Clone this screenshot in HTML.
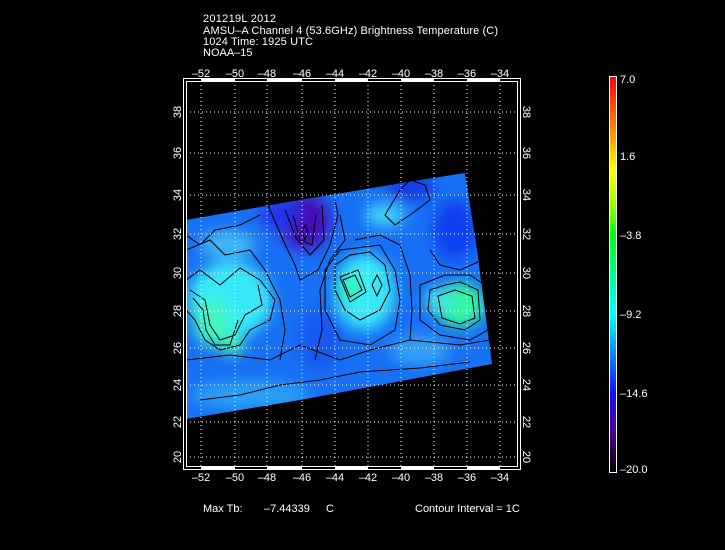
<!DOCTYPE html>
<html><head><meta charset="utf-8"><style>
html,body{margin:0;padding:0;background:#000;}
svg{display:block}
text{font-family:"Liberation Sans",sans-serif;fill:#fff;font-size:11px;}
</style></head><body>
<svg width="725" height="550" viewBox="0 0 725 550" xmlns="http://www.w3.org/2000/svg">
<defs>
<clipPath id="sw"><polygon points="186,220 300,200 420,180 465,173 477,250 492,364 300,400 186,419"/></clipPath>
<filter id="bl" x="-50%" y="-50%" width="200%" height="200%"><feGaussianBlur stdDeviation="7"/></filter>
<linearGradient id="cb" x1="0" y1="1" x2="0" y2="0">
<stop offset="0" stop-color="#000"/>
<stop offset="0.1" stop-color="#50008a"/>
<stop offset="0.2" stop-color="#1010ff"/>
<stop offset="0.4" stop-color="#00ffff"/>
<stop offset="0.6" stop-color="#00ff10"/>
<stop offset="0.68" stop-color="#a0ff00"/>
<stop offset="0.76" stop-color="#ffff00"/>
<stop offset="0.86" stop-color="#ff9000"/>
<stop offset="1" stop-color="#ff0000"/>
</linearGradient>
</defs>
<rect width="725" height="550" fill="#000"/>
<text x="203" y="22" textLength="73">201219L 2012</text>
<text x="203" y="34" textLength="295">AMSU–A Channel 4 (53.6GHz) Brightness Temperature (C)</text>
<text x="203" y="45" textLength="110">1024 Time: 1925 UTC</text>
<text x="203" y="56">NOAA–15</text>

<g clip-path="url(#sw)">
<rect x="180" y="165" width="320" height="260" fill="#1870f4"/>
<g filter="url(#bl)">
<ellipse cx="305" cy="222" rx="26" ry="28" fill="#4410b8"/>
<ellipse cx="280" cy="215" rx="20" ry="15" fill="#2030e8"/>
<ellipse cx="410" cy="188" rx="25" ry="12" fill="#1838e8"/>
<ellipse cx="455" cy="230" rx="22" ry="30" fill="#1040f0"/>
<ellipse cx="230" cy="300" rx="42" ry="38" fill="#38e8f8"/>
<ellipse cx="212" cy="322" rx="18" ry="24" fill="#40f8c0"/>
<ellipse cx="232" cy="345" rx="12" ry="10" fill="#40f0b0"/>
<ellipse cx="365" cy="292" rx="30" ry="38" fill="#38e8f8"/>
<ellipse cx="350" cy="288" rx="12" ry="10" fill="#30f8a8"/>
<ellipse cx="385" cy="215" rx="20" ry="12" fill="#40d0f8"/>
<ellipse cx="460" cy="305" rx="25" ry="22" fill="#30f8a0"/>
<ellipse cx="440" cy="300" rx="15" ry="12" fill="#40e8e0"/>
<ellipse cx="228" cy="245" rx="28" ry="14" fill="#40b8f8"/>
<ellipse cx="250" cy="395" rx="60" ry="14" fill="#2aa0f4"/>
<ellipse cx="320" cy="340" rx="22" ry="30" fill="#1858f0"/>
<ellipse cx="420" cy="350" rx="30" ry="15" fill="#30a0f4"/>
</g>
<g fill="none" stroke="#000" stroke-width="1">
<path d="M268,205 L283,240 L295,265 L300,280 L318,270 L330,245 L338,215 L335,200"/>
<path d="M285,210 L296,238 L310,255 L324,240 L322,205"/>
<path d="M293,215 L300,240 L312,245 L316,215"/>
<path d="M302,232 L305,225 L308,232 L305,240 Z"/>
<path d="M186,280 L200,270 L220,285 L240,268 L260,280 L275,300 L270,320 L250,330 L240,345 L220,350 L205,340 L195,320 L186,310"/>
<path d="M190,290 L205,300 L210,325 L220,340 L235,335 L245,315 L262,305 L258,285"/>
<path d="M193,298 L203,310 L206,330 L215,345 L230,345 L238,320"/>
<path d="M335,265 L350,255 L370,252 L385,265 L390,290 L380,310 L360,320 L345,310 L335,290 Z"/>
<path d="M343,280 L355,275 L362,290 L350,297 Z"/>
<path d="M340,277 L358,270 L366,292 L350,302 Z"/>
<path d="M325,270 L340,250 L380,245 L395,270 L400,300 L395,330 L370,345 L340,340 L325,310 Z"/>
<path d="M372,285 L377,275 L382,285 L377,296 Z"/>
<path d="M430,290 L445,285 L460,282 L478,290 L480,320 L465,330 L440,325 L428,310 Z"/>
<path d="M420,285 L445,275 L470,275 L485,285 L488,330 L470,340 L440,335 L420,320 Z"/>
<path d="M438,296 L455,290 L472,296 L475,318 L460,324 L442,318 Z"/>
<path d="M400,190 L410,180 L425,185 L430,200 L410,215 L395,225 L385,215 Z"/>
<path d="M392,185 L405,176 L420,178"/>
<path d="M186,360 L230,355 L270,360 L300,345 L340,360 L370,350 L410,340 L460,345 L490,340"/>
<path d="M200,400 L240,395 L280,385 L320,380 L360,372 L420,368 L470,362"/>
<path d="M186,250 L210,240 L225,255 L250,250 L265,270 L280,300 L285,330 L280,360"/>
<path d="M340,215 L345,240 L330,260 L320,290 L322,330 L315,360"/>
<path d="M355,240 L380,235 L400,245 L410,275 L412,310 L410,340"/>
<path d="M430,250 L440,265 L460,270 L478,262"/>
<path d="M186,235 L200,245 L215,230 L240,225 L260,215"/>
</g>
</g>

<g stroke="#fff" stroke-width="1" stroke-dasharray="1,3" fill="none">
<path d="M201,81V466M235,81V466M267,81V466M302,81V466M335,81V466M368,81V466M401,81V466M434,81V466M467,81V466M500,81V466"/>
<path d="M186,112H517M186,153H517M186,195H517M186,234H517M186,273H517M186,311H517M186,348H517M186,385H517M186,422H517M186,457H517"/>
</g>
<g fill="none" stroke="#fff" stroke-width="1">
<rect x="183.5" y="78.5" width="337" height="391"/>
<rect x="186.5" y="81.5" width="331" height="385"/>
</g>
<g fill="#fff">
<rect x="201" y="79" width="34" height="2"/><rect x="267" y="79" width="35" height="2"/><rect x="335" y="79" width="33" height="2"/><rect x="401" y="79" width="33" height="2"/><rect x="467" y="79" width="33" height="2"/>
<rect x="201" y="467" width="34" height="2"/><rect x="267" y="467" width="35" height="2"/><rect x="335" y="467" width="33" height="2"/><rect x="401" y="467" width="33" height="2"/><rect x="467" y="467" width="33" height="2"/>
</g>
<g text-anchor="middle">
<text x="201" y="77">–52</text><text x="235" y="77">–50</text><text x="267" y="77">–48</text><text x="302" y="77">–46</text><text x="335" y="77">–44</text><text x="368" y="77">–42</text><text x="401" y="77">–40</text><text x="434" y="77">–38</text><text x="467" y="77">–36</text><text x="500" y="77">–34</text>
<text x="201" y="481">–52</text><text x="235" y="481">–50</text><text x="267" y="481">–48</text><text x="302" y="481">–46</text><text x="335" y="481">–44</text><text x="368" y="481">–42</text><text x="401" y="481">–40</text><text x="434" y="481">–38</text><text x="467" y="481">–36</text><text x="500" y="481">–34</text>
</g>
<g text-anchor="middle">
<text transform="translate(181,112) rotate(-90)">38</text><text transform="translate(181,153) rotate(-90)">36</text><text transform="translate(181,195) rotate(-90)">34</text><text transform="translate(181,234) rotate(-90)">32</text><text transform="translate(181,273) rotate(-90)">30</text><text transform="translate(181,311) rotate(-90)">28</text><text transform="translate(181,348) rotate(-90)">26</text><text transform="translate(181,385) rotate(-90)">24</text><text transform="translate(181,422) rotate(-90)">22</text><text transform="translate(181,457) rotate(-90)">20</text>
<text transform="translate(523,112) rotate(90)">38</text><text transform="translate(523,153) rotate(90)">36</text><text transform="translate(523,195) rotate(90)">34</text><text transform="translate(523,234) rotate(90)">32</text><text transform="translate(523,273) rotate(90)">30</text><text transform="translate(523,311) rotate(90)">28</text><text transform="translate(523,348) rotate(90)">26</text><text transform="translate(523,385) rotate(90)">24</text><text transform="translate(523,422) rotate(90)">22</text><text transform="translate(523,457) rotate(90)">20</text>
</g>

<rect x="609.5" y="76.5" width="7" height="396" fill="url(#cb)" stroke="#fff" stroke-width="1"/>
<text x="620" y="83">7.0</text>
<text x="620" y="160">1.6</text>
<text x="620" y="239">–3.8</text>
<text x="620" y="318">–9.2</text>
<text x="620" y="397">–14.6</text>
<text x="620" y="473">–20.0</text>

<text x="203" y="512">Max Tb:</text>
<text x="264" y="512">–7.44339</text>
<text x="326" y="512">C</text>
<text x="415" y="512">Contour Interval = 1C</text>
</svg>
</body></html>
